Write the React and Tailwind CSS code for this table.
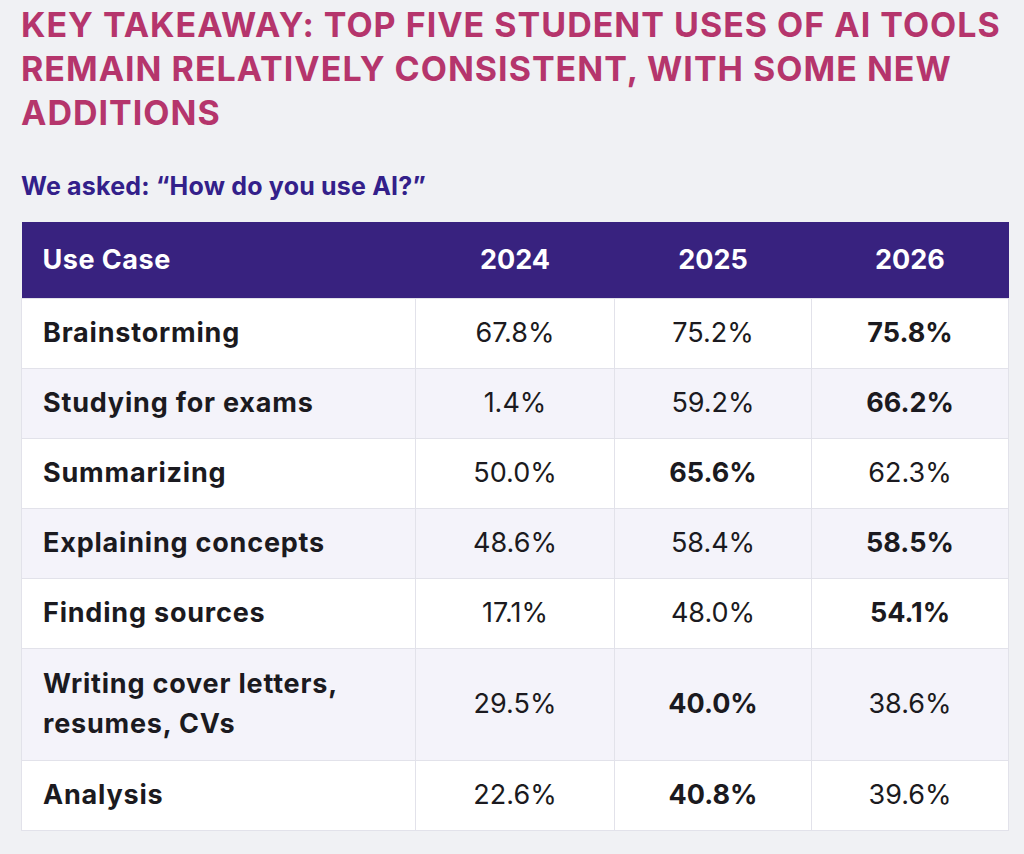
const rows = [
  { label: "Brainstorming", v: ["67.8%", "75.2%", "75.8%"], bold: 2 },
  { label: "Studying for exams", v: ["1.4%", "59.2%", "66.2%"], bold: 2 },
  { label: "Summarizing", v: ["50.0%", "65.6%", "62.3%"], bold: 1 },
  { label: "Explaining concepts", v: ["48.6%", "58.4%", "58.5%"], bold: 2 },
  { label: "Finding sources", v: ["17.1%", "48.0%", "54.1%"], bold: 2 },
  { label: ["Writing cover letters,", "resumes, CVs"], v: ["29.5%", "40.0%", "38.6%"], bold: 1, tall: true },
  { label: "Analysis", v: ["22.6%", "40.8%", "39.6%"], bold: 1 },
]

const App = () => {
  return (
    <div className="min-h-[854px] bg-[#f0f1f4] pl-[21px] pt-[3px] font-['Inter',sans-serif]">
      <h1 className="text-[34px] leading-[44px] font-bold uppercase text-[#b5356c] tracking-[1px]">
        Key Takeaway: Top five student uses of AI tools remain relatively consistent, with some new additions
      </h1>

      <p className="mt-[36px] text-[25px] leading-[30px] font-bold text-[#33208a] tracking-[0.2px]">
        We asked: “How do you use AI?”
      </p>

      <table className="mt-[21px] w-[987px] border-collapse table-fixed">
        <colgroup>
          <col className="w-[394px]" />
          <col className="w-[199px]" />
          <col className="w-[197px]" />
          <col className="w-[197px]" />
        </colgroup>
        <thead>
          <tr className="bg-[#38227f] text-white h-[76px]">
            <th className="text-left pl-[21px] text-[27px] font-bold tracking-[0.5px]">Use Case</th>
            <th className="text-center text-[27px] font-bold">2024</th>
            <th className="text-center text-[27px] font-bold">2025</th>
            <th className="text-center text-[27px] font-bold">2026</th>
          </tr>
        </thead>
        <tbody>
          {rows.map((r, i) => (
            <tr
              key={i}
              className={`${r.tall ? 'h-[112px]' : 'h-[70px]'} ${i % 2 === 1 ? 'bg-[#f4f3fa]' : 'bg-white'}`}
            >
              <td className="border border-[#e2e2ea] pl-[21px] text-[27px] font-bold leading-[40px] tracking-[0.8px] text-[#1b1a20]">
                {Array.isArray(r.label) ? r.label.map((l) => <div key={l}>{l}</div>) : r.label}
              </td>
              {r.v.map((val, j) => (
                <td
                  key={j}
                  className={`border border-[#e2e2ea] text-center text-[27px] text-[#1b1a20] ${r.bold === j ? 'font-bold' : 'font-normal'}`}
                >
                  {val}
                </td>
              ))}
            </tr>
          ))}
        </tbody>
      </table>
    </div>
  )
}

export default App
